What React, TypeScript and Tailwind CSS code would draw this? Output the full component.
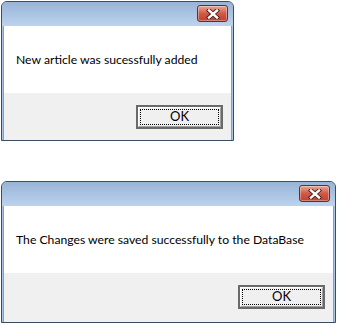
import React from "react";

const FONT = { fontFamily: '"Segoe UI", Lato, "Noto Sans", sans-serif' };

function CloseButton() {
  return (
    <div className="absolute right-[5px] top-[3px] flex h-[17px] w-[31px] items-center justify-center rounded-[3px] border border-[#6b2c26] bg-gradient-to-b from-[#e7a597] via-[#cf5a47] to-[#c0402e] shadow-[inset_0_0_0_1px_rgba(255,255,255,0.35)]">
      <svg width="14" height="10" viewBox="0 0 14 10">
        <path d="M3 1.5 L11 8.5 M11 1.5 L3 8.5" stroke="#4a1e1a" strokeWidth="4.2" strokeLinecap="square" />
        <path d="M3 1.5 L11 8.5 M11 1.5 L3 8.5" stroke="#ffffff" strokeWidth="2.4" strokeLinecap="square" />
      </svg>
    </div>
  );
}

function OkButton() {
  return (
    <div className="h-[24px] w-[87px] border-2 border-[#6a6a6a] bg-[#f0f0f0]">
      <div className="h-full w-full border border-t-white border-l-white border-r-[#a0a0a0] border-b-[#a0a0a0] p-[1px]">
        <div className="flex h-full w-full items-center justify-center border border-dotted border-black text-[13px] text-black" style={FONT}>
          OK
        </div>
      </div>
    </div>
  );
}

function MessageBox({ text, width, grayH }: { text: string; width: string; grayH: string }) {
  return (
    <div className={`${width} ml-[1px] rounded-t-[6px] border border-[#3b4d63] bg-[#a9c6e6]`}>
      {/* Title bar */}
      <div className="relative h-[24px] rounded-t-[5px] bg-gradient-to-b from-[#98b4d6] to-[#bbd3ee]">
        <CloseButton />
      </div>
      {/* Client area */}
      <div className="mx-[1px] border-x border-[#4fb3ea]">
        <div className="h-[67px] bg-white pl-[12px] pt-[26px] text-[12.2px] leading-[16px] text-black" style={FONT}>
          {text}
        </div>
        <div className={`${grayH} flex justify-end bg-[#f0f0f0] pr-[8px] pt-[12px]`}>
          <OkButton />
        </div>
      </div>
    </div>
  );
}

export default function App() {
  return (
    <div className="h-[325px] w-[337px] overflow-hidden bg-white pt-[1px]">
      <MessageBox text="New article was sucessfully added" width="w-[233px]" grayH="h-[47px]" />
      <div className="h-[40px]" />
      <MessageBox text="The Changes were saved successfully to the DataBase" width="w-[335px]" grayH="h-[49px]" />
    </div>
  );
}
